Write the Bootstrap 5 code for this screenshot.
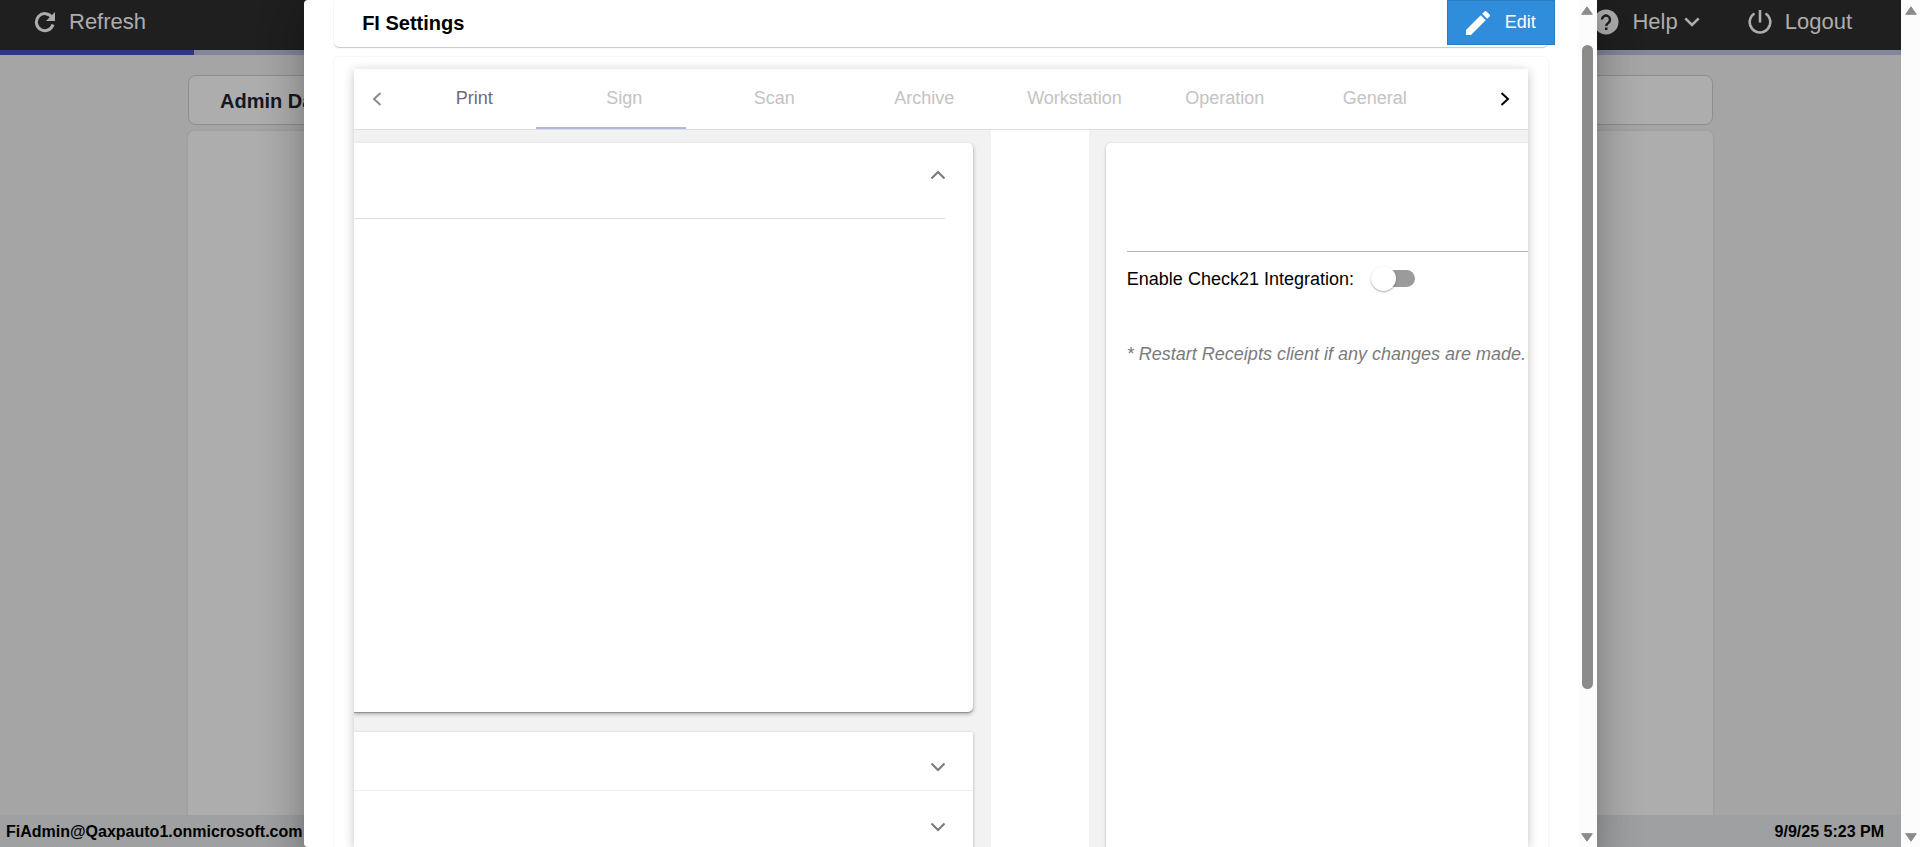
<!DOCTYPE html>
<html lang="en">
<head>
<meta charset="utf-8">
<meta name="viewport" content="width=device-width, initial-scale=1">
<title>FI Settings</title>
<link href="https://cdn.jsdelivr.net/npm/bootstrap@5.3.0/dist/css/bootstrap.min.css" rel="stylesheet">
<style>
body { font-family: "Liberation Sans", Arial, sans-serif; font-size: 18px; line-height: 24px; color: #000; }
.scroll-rail { width: 19px; background: #fcfcfc; padding: 6px 0 5px; flex: none; }
.scroll-thumb { width: 11px; flex: 0 1 644px; border-radius: 6px; background: #8b8b8b; margin-top: 30px; }
.page-shell { background: #a5a5a5; min-width: 0; }
/* top bar */
.top-bar { background: #1f1f1f; height: 50px; padding: 0 49px 6px 34px; font-size: 22px; }
.top-bar a { color: #adadad; gap: 13px; }
.help-label { gap: 6px; }
.load-track { height: 5px; background: #82859c; }
.load-value { height: 5px; background: #2b387f; }
/* page behind the dialog */
.dash { padding: 20px 188px 0; }
.dash-title { height: 50px; border: 1px solid #8e8e8e; border-radius: 8px; background: #adadad; padding: 2px 31px 0; font-size: 20px; color: #151820; margin-bottom: 6px; }
.dash-body { background: #adadad; border-radius: 6px 6px 0 0; box-shadow: 0 0 2px #8e8e8e; }
.status-bar { height: 32px; background: #9ea0a1; padding: 2px 17px 0 6px; font-size: 16px; z-index: 1; }
/* dialog */
.dialog-layer { z-index: 2; }
.fi-dialog { width: 68%; background: #fff; border-radius: 4px 0 0 4px; overflow: hidden; }
.dialog-shade { width: 68%; border-radius: 4px; box-shadow: 0 11px 15px -7px rgba(0,0,0,.2), 0 24px 38px 3px rgba(0,0,0,.14), 0 9px 46px 8px rgba(0,0,0,.12); }
.dialog-main { padding: 0 30px; min-width: 0; }
.dialog-head { height: 47px; padding: 0 28px 2px; border-radius: 0 0 5px 5px; box-shadow: 0 1px 1px rgba(0,0,0,.2), 0 0 2px rgba(0,0,0,.08); margin-bottom: 10px; }
.dialog-head h1 { font-size: 20px; line-height: 24px; }
.edit-btn { width: 108px; height: 45px; right: -7px; top: 0; background: #308ddb; border: 1px solid #2a7cc1; border-radius: 0; color: #fff; font-size: 18px; padding: 0 18px 0 14px; }
.edit-btn:hover { background: #2a7cc1; color: #fff; }
.dialog-card { border-radius: 5px 5px 0 0; box-shadow: 0 0 2px rgba(0,0,0,.12); padding: 12px 20px 0; min-height: 0; }
.panel { box-shadow: 0 2px 10px rgba(0,0,0,.24); min-height: 0; clip-path: inset(-12px -12px 0 -12px); }
.tab-strip { height: 61px; border-bottom: 1px solid #dcdcdc; }
.tab-arrow { width: 45px; flex: none; border: 0; background: none; padding: 0 0 2px; }
.tab-item { min-width: 150px; border: 0; background: none; padding: 0 28px 2px; color: #c3c3c3; }
.tab-item.active { color: #6b6a80; }
.ink { width: 150px; height: 2px; left: 137px; bottom: 0; background: #aeb7df; }
.tab-body { background: #fff; min-height: 0; }
.pane-left { width: 637px; background: #f2f2f2; padding: 13px 18px 0 0; }
.pane-right { width: 439px; background: #f2f2f2; padding: 13px 0 0 17px; }
.sheet { background: #fff; box-shadow: 0 1px 3px rgba(0,0,0,.28); }
.sheet-open { height: 569px; border-radius: 0 5px 5px 0; margin-bottom: 20px; padding-right: 28px; box-shadow: 0 1px 1px #8f8f8f, 0 2px 4px rgba(0,0,0,.3); }
.sheet-head { height: 76px; border-bottom: 1px solid #dcdcdc; padding: 0 0 11px; margin: 0; }
.sheet-toggle { border: 0; background: none; padding: 0; line-height: 0; }
.sheet-row { height: 59px; padding-right: 28px; padding-top: 12px; border-bottom: 1px solid #f0f0f0; }
.sheet-row + .sheet-row { height: 60px; border: 0; }
.sheet-right { border-radius: 5px 0 0 0; padding-left: 21px; }
.field-space { height: 109px; border-bottom: 1px solid #b5b5b5; margin-bottom: 14px; }
.switch-wrap { width: 45px; height: 25px; }
.switch-wrap input { appearance: none; width: 37px; height: 17px; border-radius: 9px; background: #9b9b9b; margin: 0; position: relative; }
.switch-wrap input::before { content: ""; position: absolute; left: -7px; top: -4px; width: 25px; height: 25px; border-radius: 50%; background: #fff; box-shadow: 0 1px 2px rgba(0,0,0,.35); }
.switch-wrap input:checked::before { left: 19px; }
.note { color: #7b7b7b; margin-top: 51px; }
</style>
</head>
<body>
<div class="d-flex vh-100 overflow-hidden">
  <div class="page-shell position-relative flex-grow-1 d-flex flex-column overflow-hidden">
    <nav class="top-bar d-flex align-items-center">
      <a href="#" class="d-flex align-items-center text-decoration-none me-auto">
        <svg width="22" height="22" viewBox="0 0 22 22" fill="none" stroke="currentColor" stroke-width="3"><path d="M18 6.500A8.500 8.500 0 1 0 19 13.500"/><path d="M21 1v9h-9z" fill="currentColor" stroke="none"/></svg>
        <span>Refresh</span>
      </a>
      <a href="#" class="d-flex align-items-center text-decoration-none me-5">
        <svg width="26" height="26" viewBox="0 0 26 26"><circle cx="13" cy="13" r="12.500" fill="currentColor"/><path d="M9 10.500a4 4 0 1 1 6.500 3.200C14 14.800 13.200 15.300 13.200 17" fill="none" stroke="#1f1f1f" stroke-width="2.400"/><rect x="12" y="18.500" width="2.500" height="2.500" fill="#1f1f1f"/></svg>
        <span class="help-label d-flex align-items-center">Help
          <svg width="16" height="10" viewBox="0 0 16 10" fill="none" stroke="currentColor" stroke-width="2.600"><path d="M1.300 1.300 8 8l6.700-6.700"/></svg>
        </span>
      </a>
      <a href="#" class="d-flex align-items-center text-decoration-none">
        <svg width="24" height="24" viewBox="0 0 24 24" fill="none" stroke="currentColor" stroke-width="2.600"><path d="M12 0v12.500M6.500 3.500a10.300 10.300 0 1 0 11 0"/></svg>
        <span>Logout</span>
      </a>
    </nav>
    <div class="load-track"><div class="load-value" style="width:10.2%"></div></div>
    <main class="dash flex-grow-1 d-flex flex-column">
      <h2 class="dash-title d-flex align-items-center fw-bold">Admin Dashboard</h2>
      <div class="dash-body flex-grow-1 mt-0"></div>
    </main>
    <footer class="status-bar d-flex align-items-center justify-content-between fw-bold">
      <span>FiAdmin@Qaxpauto1.onmicrosoft.com</span>
      <span>9/9/25 5:23 PM</span>
    </footer>

    <div class="dialog-layer position-absolute top-0 start-0 w-100 h-100 d-flex justify-content-center"><div class="dialog-shade"></div></div>
    <div class="dialog-layer position-absolute top-0 start-0 w-100 h-100 d-flex justify-content-center">
      <section class="fi-dialog d-flex" role="dialog" aria-labelledby="dlg-title">
        <div class="dialog-main flex-grow-1 d-flex flex-column">
          <header class="dialog-head position-relative d-flex align-items-center flex-shrink-0">
            <h1 id="dlg-title" class="fw-bold m-0">FI Settings</h1>
            <button type="button" class="btn edit-btn position-absolute d-flex align-items-center justify-content-between">
              <svg width="32" height="32" viewBox="0 0 24 24" fill="currentColor"><path d="M3 17.250V21h3.750L17.810 9.940l-3.750-3.750L3 17.250zM20.710 7.040a1 1 0 0 0 0-1.410l-2.340-2.340a1 1 0 0 0-1.410 0l-1.830 1.830 3.750 3.750 1.830-1.830z"/></svg>
              <span>Edit</span>
            </button>
          </header>
          <div class="dialog-card flex-grow-1 d-flex flex-column">
            <div class="panel flex-grow-1 d-flex flex-column">
              <div class="tab-strip d-flex flex-shrink-0">
                <button type="button" class="tab-arrow" aria-label="Previous tabs"><svg width="10" height="14" viewBox="0 0 10 14" fill="none" stroke="#8c8c8c" stroke-width="2"><path d="M8.500 1 2 7l6.500 6"/></svg></button>
                <div class="position-relative flex-grow-1 d-flex" role="tablist">
                  <button type="button" role="tab" class="tab-item active">Print</button>
                  <button type="button" role="tab" class="tab-item">Sign</button>
                  <button type="button" role="tab" class="tab-item">Scan</button>
                  <button type="button" role="tab" class="tab-item">Archive</button>
                  <button type="button" role="tab" class="tab-item">Workstation</button>
                  <button type="button" role="tab" class="tab-item">Operation</button>
                  <button type="button" role="tab" class="tab-item">General</button>
                  <span class="ink position-absolute"></span>
                </div>
                <button type="button" class="tab-arrow" aria-label="Next tabs"><svg width="10" height="14" viewBox="0 0 10 14" fill="none" stroke="#000" stroke-width="2"><path d="M1.500 1 8 7l-6.500 6"/></svg></button>
              </div>
              <div class="tab-body flex-grow-1 d-flex justify-content-between overflow-hidden">
                <div class="pane-left">
                  <div class="sheet sheet-open">
                    <div class="sheet-head d-flex justify-content-end align-items-center">
                      <button type="button" class="sheet-toggle" aria-label="Collapse"><svg width="14" height="10" viewBox="0 0 14 10" fill="none" stroke="#7b7b7b" stroke-width="2"><path d="M.500 8.500 7 2l6.500 6.500"/></svg></button>
                    </div>
                  </div>
                  <div class="sheet">
                    <div class="sheet-row d-flex justify-content-end align-items-center"><button type="button" class="sheet-toggle" aria-label="Expand"><svg width="14" height="10" viewBox="0 0 14 10" fill="none" stroke="#7b7b7b" stroke-width="2"><path d="M.500 1.500 7 8l6.500-6.500"/></svg></button></div>
                    <div class="sheet-row d-flex justify-content-end align-items-center"><button type="button" class="sheet-toggle" aria-label="Expand"><svg width="14" height="10" viewBox="0 0 14 10" fill="none" stroke="#7b7b7b" stroke-width="2"><path d="M.500 1.500 7 8l6.500-6.500"/></svg></button></div>
                  </div>
                </div>
                <div class="pane-right d-flex">
                  <div class="sheet sheet-right flex-grow-1">
                    <div class="field-space"></div>
                    <div class="d-flex align-items-center">
                      <label for="check21">Enable Check21 Integration:</label>
                      <span class="switch-wrap ms-3 d-flex align-items-center justify-content-end"><input type="checkbox" role="switch" id="check21"></span>
                    </div>
                    <p class="note fst-italic mb-0 text-nowrap">* Restart Receipts client if any changes are made.</p>
                  </div>
                </div>
              </div>
            </div>
          </div>
        </div>
        <div class="scroll-rail d-flex flex-column align-items-center">
          <svg class="flex-shrink-0" width="12" height="9" viewBox="0 0 12 9" fill="#8b8b8b" stroke="#8b8b8b" stroke-linejoin="round"><path d="M6 .800 11.300 8.300H.700z"/></svg>
          <div class="scroll-thumb"></div>
          <svg class="mt-auto flex-shrink-0" width="12" height="9" viewBox="0 0 12 9" fill="#8b8b8b" stroke="#8b8b8b" stroke-linejoin="round"><path d="M6 8.200 11.300.700H.700z"/></svg>
        </div>
      </section>
    </div>
  </div>
  <div class="scroll-rail d-flex flex-column align-items-center justify-content-between">
    <svg width="12" height="9" viewBox="0 0 12 9" fill="#8b8b8b" stroke="#8b8b8b" stroke-linejoin="round"><path d="M6 .800 11.300 8.300H.700z"/></svg>
    <svg width="12" height="9" viewBox="0 0 12 9" fill="#8b8b8b" stroke="#8b8b8b" stroke-linejoin="round"><path d="M6 8.200 11.300.700H.700z"/></svg>
  </div>
</div>
<script src="https://cdn.jsdelivr.net/npm/bootstrap@5.3.0/dist/js/bootstrap.bundle.min.js"></script>
</body>
</html>
